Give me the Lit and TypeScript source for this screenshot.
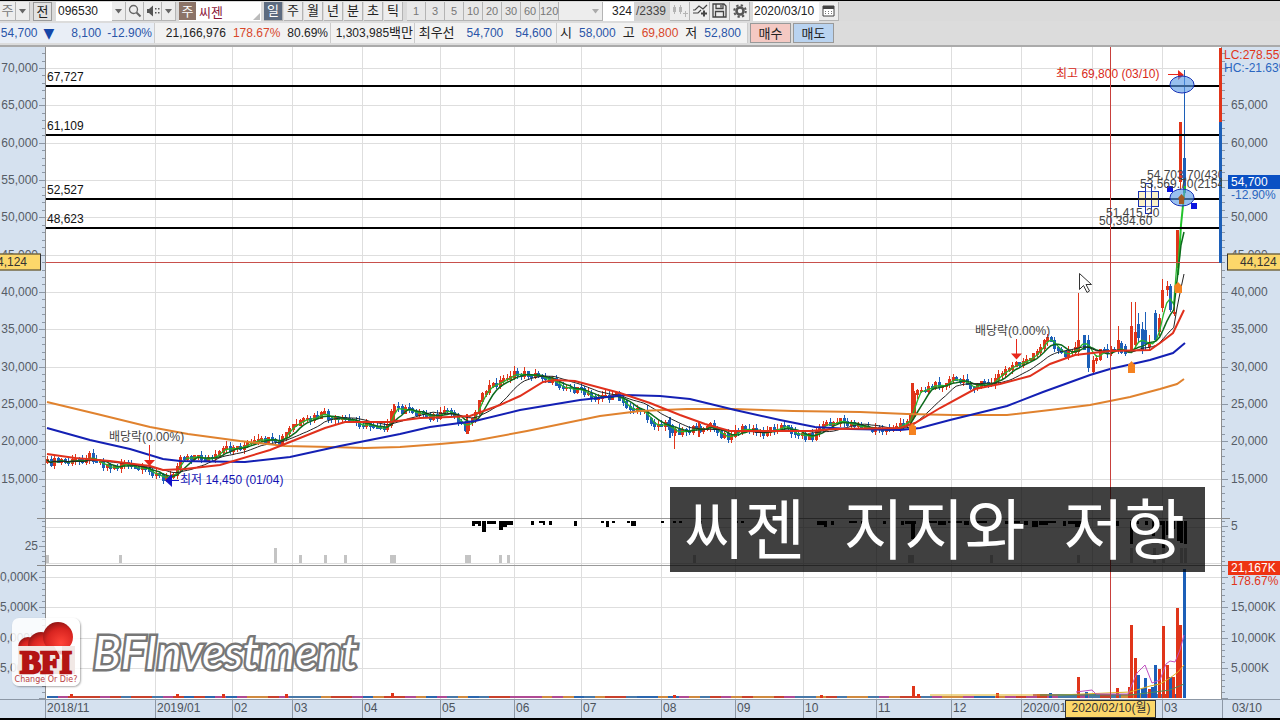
import { LitElement, html, svg, css } from "lit";
import { customElement } from "lit/decorators.js";
import { classMap } from "lit/directives/class-map.js";
import { styleMap } from "lit/directives/style-map.js";

type Pt = [number, number];

/* Drawing space of the plot: x 45..1222, y 47..699 */
const BOX = { x: 45, y: 47, w: 1177, h: 652 };
const priceY = (v: number) => 68 + (70000 - v) * 0.007464;
const volumeY = (k: number) => 698 - k * 0.00605;
const pctX = (x: number) => `${((x - BOX.x) / BOX.w) * 100}%`;
const pctY = (y: number) => `${((y - BOX.y) / BOX.h) * 100}%`;

const UP = "#e0351a";
const DOWN = "#1c5fb8";

const PRICES = [70, 65, 60, 55, 50, 45, 40, 35, 30, 25, 20, 15].map((n) => n * 1000);
const VOLUMES = [20000, 15000, 10000, 5000];
const MONTHS: [number, string][] = [
  [45, "2018/11"], [155, "2019/01"], [232, "02"], [292, "03"], [362, "04"], [440, "05"], [514, "06"],
  [581, "07"], [661, "08"], [735, "09"], [803, "10"], [876, "11"], [951, "12"], [1021, "2020/01"],
  [1162, "03"],
];
const GRID_X = [155, 232, 292, 362, 440, 514, 581, 661, 735, 803, 876, 951, 1021, 1092, 1162];
const LEVELS: [number, string][] = [[86, "67,727"], [135, "61,109"], [199, "52,527"], [228, "48,623"]];

const CLOSE: Pt[] = [
  [47, 463], [60, 461], [70, 463], [90, 456], [103, 464], [113, 469], [124, 462], [130, 468], [147, 471],
  [157, 473], [163, 481], [172, 475], [180, 458], [190, 456], [207, 459], [215, 458], [223, 450], [243, 446],
  [265, 440], [278, 444], [292, 426], [307, 421], [323, 414], [333, 421], [345, 420], [365, 425], [388, 427],
  [393, 406], [400, 410], [425, 414], [435, 418], [448, 411], [460, 422], [466, 428], [475, 411], [487, 388],
  [500, 382], [510, 375], [525, 374], [545, 377], [555, 383], [575, 390], [600, 398], [615, 395], [625, 407],
  [640, 410], [655, 425], [665, 425], [675, 431], [700, 429], [712, 426], [720, 437], [730, 436], [740, 429],
  [762, 433], [780, 426], [800, 435], [812, 437], [822, 425], [840, 422], [855, 424], [870, 430], [885, 430],
  [905, 425], [910, 419], [913, 392], [925, 389], [940, 384], [953, 380], [975, 386], [990, 384], [1000, 375],
  [1015, 364], [1030, 360], [1040, 350], [1048, 334], [1055, 350], [1065, 355], [1075, 347], [1085, 340],
  [1092, 362], [1100, 352], [1112, 350], [1122, 348], [1127, 360], [1131, 345], [1136, 338], [1142, 342],
  [1150, 345], [1156, 335], [1160, 318], [1163, 295], [1167, 292], [1171, 305], [1174, 312],
];

const ORANGE: Pt[] = [[47, 402], [97, 414], [150, 427], [188, 434], [240, 441], [285, 446], [330, 447], [365, 448], [400, 447], [440, 444], [473, 441], [527, 431], [600, 416], [640, 411], [687, 409], [733, 409], [793, 411], [860, 412], [907, 414], [953, 415], [1007, 415], [1050, 410], [1090, 405], [1130, 397], [1160, 389], [1177, 384], [1184, 379]];
const BLUE: Pt[] = [[47, 428], [90, 440], [130, 449], [163, 459], [180, 461], [245, 462], [290, 457], [340, 446], [400, 434], [430, 427], [475, 421], [520, 410], [580, 400], [625, 395], [660, 396], [690, 399], [735, 410], [780, 420], [815, 427], [850, 429], [900, 430], [920, 428], [950, 420], [1007, 406], [1043, 392], [1090, 375], [1110, 369], [1150, 360], [1173, 353], [1185, 343]];
const RED: Pt[] = [[47, 454], [75, 458], [110, 461], [150, 466], [163, 470], [185, 469], [220, 465], [270, 450], [300, 438], [325, 428], [345, 422], [390, 422], [420, 418], [450, 417], [470, 416], [500, 405], [520, 396], [543, 382], [555, 380], [575, 381], [620, 393], [650, 403], [680, 415], [705, 424], [730, 431], [780, 431], [810, 431], [835, 429], [900, 428], [915, 423], [940, 408], [975, 389], [1000, 384], [1030, 376], [1050, 364], [1075, 355], [1110, 351], [1150, 350], [1160, 343], [1173, 333], [1184, 310]];

/* Candles: x, high, body top, body bottom, low, rising */
type Candle = [number, number, number, number, number, boolean];
const TAIL: Candle[] = [
  [1078, 293, 340, 352, 356, true], [1084, 335, 335, 350, 350, false], [1088, 335, 340, 368, 372, false],
  [1093, 356, 360, 372, 374, true], [1118, 326, 340, 351, 352, true], [1121, 341, 343, 353, 354, false],
  [1131, 302, 326, 351, 353, true], [1135, 302, 332, 345, 349, true], [1138, 313, 324, 338, 342, false],
  [1142, 322, 329, 350, 354, false], [1145, 312, 330, 344, 350, false], [1149, 335, 342, 347, 351, true],
  [1155, 310, 313, 340, 342, false], [1159, 314, 318, 332, 336, true], [1162, 279, 290, 308, 312, true],
  [1167, 281, 286, 290, 296, true], [1170, 284, 286, 310, 312, false], [1174, 300, 312, 314, 316, true],
  [1177, 230, 230, 268, 268, true], [1180, 122, 122, 182, 190, true], [1184, 70, 158, 193, 193, false],
];

const noise = (n: number) => {
  const s = Math.sin(n * 12.9898) * 43758.5453;
  return s - Math.floor(s);
};
const at = (pts: Pt[], x: number) => {
  for (let i = 1; i < pts.length; i++) {
    if (x <= pts[i][0]) {
      const [x0, y0] = pts[i - 1];
      const [x1, y1] = pts[i];
      return y0 + ((y1 - y0) * (x - x0)) / (x1 - x0);
    }
  }
  return pts[pts.length - 1][1];
};

const DAYS = Array.from({ length: 322 }, (_, i) => 47 + i * 3.51).filter((x) => x < 1176);
const CLOSES = DAYS.map((x, i) => at(CLOSE, x) + (noise(i) - 0.5) * 6);
const mean = (n: number): Pt[] =>
  DAYS.map((x, i) => {
    const part = CLOSES.slice(Math.max(0, i - n + 1), i + 1);
    return [x, part.reduce((a, b) => a + b, 0) / part.length];
  });
const CANDLES: Candle[] = DAYS.map((x, i): Candle => {
  const prev = i ? CLOSES[i - 1] : CLOSES[i] + 2;
  const rising = CLOSES[i] < prev;
  const top = Math.min(prev, CLOSES[i]) - 1;
  const bottom = Math.max(prev, CLOSES[i]) + 1;
  return [Math.round(x), top - noise(i + 500) * 5, top, bottom, bottom + noise(i + 900) * 4, rising];
})
  .filter((c) => c[0] < 1128 && !(c[0] > 1076 && c[0] < 1096))
  .concat(TAIL);

const HANGING: [number, number, number][] = [
  [472, 9, 3], [472, 3, 5], [478, 3, 5], [482, 4, 11], [487, 9, 3], [499, 4, 9], [503, 4, 6], [507, 6, 4],
  [531, 3, 4], [539, 6, 2], [543, 2, 4], [549, 3, 4], [574, 3, 5], [601, 3, 2], [606, 3, 6], [612, 3, 2],
  [627, 3, 2], [631, 5, 5], [661, 3, 2], [673, 3, 2], [679, 3, 2], [697, 5, 3], [715, 3, 2], [735, 3, 2],
  [741, 3, 2], [817, 7, 4], [824, 3, 6], [831, 3, 4], [849, 8, 2], [861, 4, 3], [883, 3, 3], [901, 3, 4],
  [905, 11, 3], [911, 4, 18], [923, 14, 2], [938, 8, 4], [948, 14, 2], [964, 5, 4], [972, 15, 2], [1005, 4, 3],
  [1014, 6, 2], [1024, 4, 4], [1032, 6, 6], [1039, 9, 4], [1048, 8, 2], [1063, 3, 5], [1068, 15, 3],
  [1075, 5, 6], [1102, 3, 2], [1116, 3, 5], [1130, 3, 23], [1134, 5, 3], [1145, 3, 4], [1152, 3, 15],
  [1157, 7, 4], [1162, 3, 27], [1166, 3, 14], [1172, 3, 8], [1177, 3, 20], [1180, 3, 22], [1184, 3, 23],
];
const STANDING: [number, number, number][] = [
  [46, 3, 8], [119, 3, 8], [274, 3, 15], [299, 3, 8], [324, 3, 8], [344, 3, 8], [390, 6, 8], [465, 6, 8],
  [499, 3, 8], [507, 3, 8], [693, 3, 8], [908, 6, 8], [990, 3, 8], [1077, 3, 8], [1130, 3, 15],
  [1153, 3, 15], [1162, 3, 15], [1180, 3, 15], [1184, 3, 15],
];
const VOLUME_BARS: [number, number, boolean][] = [
  [71, 694, true], [177, 694, true], [223, 694, true], [286, 694, true], [392, 693, true], [674, 695, true],
  [821, 695, true], [913, 686, true], [918, 694, true], [997, 693, true], [1050, 693, false],
  [1078, 677, true], [1086, 692, false], [1117, 688, true], [1129, 687, true], [1131, 625, true], [1135, 658, true],
  [1138, 675, false], [1142, 688, false], [1145, 678, false], [1149, 689, true], [1152, 687, false], [1155, 665, false],
  [1159, 669, true], [1163, 626, true], [1167, 665, true], [1170, 677, false], [1173, 677, true],
  [1177, 608, true], [1180, 625, true], [1184, 569, false],
];
const MAGENTA: Pt[] = [[1076, 692], [1092, 690], [1096, 694], [1128, 694], [1137, 673], [1145, 665], [1152, 683], [1160, 680], [1166, 664], [1170, 661], [1175, 662], [1180, 650], [1184, 635]];
const GOLD: Pt[] = [[930, 695], [1060, 695], [1130, 692], [1150, 686], [1160, 684], [1170, 678], [1178, 672], [1184, 665]];
const GREEN_VOL: Pt[] = [[1040, 695], [1130, 695], [1155, 692], [1170, 690], [1184, 684]];

const path = (pts: Pt[]) => pts.map((p, i) => `${i ? "L" : "M"}${p[0].toFixed(1)} ${p[1].toFixed(1)}`).join("");

const LABELS: { x: number; y: number; text: string; tone?: string }[] = [
  ...LEVELS.map(([y, text]) => ({ x: 47, y: y - 9, text, tone: "ink" })),
  { x: 109, y: 437, text: "배당락(0.00%)" },
  { x: 975, y: 331, text: "배당락(0.00%)" },
  { x: 180, y: 480, text: "최저 14,450 (01/04)", tone: "low" },
  { x: 1056, y: 74, text: "최고 69,800 (03/10)", tone: "high" },
  { x: 1147, y: 175, text: "54,703.70(430.20%)" },
  { x: 1140, y: 184, text: "53,569.70(2154.1%)" },
  { x: 1106, y: 213, text: "51,415.20" },
  { x: 1099, y: 221, text: "50,394.60" },
];

const FONT = css`
  font-family: "Liberation Sans", "Noto Sans CJK KR", sans-serif;
`;

@customElement("stock-toolbar")
export class StockToolbar extends LitElement {
  static styles = css`
    :host { display: flex; align-items: center; height: 20px; background: #dadada; color: #222; overflow: hidden; }
    * { box-sizing: border-box; }
    button, input, select { ${FONT} font-size: 12px; line-height: 18px; color: inherit; margin: 0; padding: 0; border: 0; border-radius: 0; }
    button, select, .total { flex: none; height: 19px; background: #ededed; border-right: 1px solid #b4b4b4; border-bottom: 1px solid #b4b4b4; }
    button { width: 20px; display: grid; place-items: center; }
    .period { width: 19px; font-size: 13px; margin-right: 1px; }
    .minute { width: 19px; color: #777; background: #e8e8e8; font-size: 11px; }
    .active { background: #5c6b80; color: #fff; }
    .kind { width: 16px; color: #777; font-size: 13px; }
    .slim { width: 18px; }
    .framed { border: 1px solid #999; background: #e2e2e2; margin-left: 3px; }
    .gap { margin-left: 3px; }
    input { height: 19px; background: #fff; }
    .code { width: 56px; padding-left: 2px; }
    .name { width: 65px; padding-left: 3px; color: #8a1538; font-size: 13px; }
    .count { width: 31px; text-align: right; padding-right: 2px; }
    .total { ${FONT} width: 36px; font-size: 12px; line-height: 18px; background: #d4d4d4; border: 0; padding-left: 2px; color: #444; }
    .date { width: 66px; padding-left: 1px; }
    .drop { position: relative; display: flex; flex: none; }
    .drop select { width: 14px; appearance: none; color: transparent; }
    .drop.blank select { width: 44px; }
    .drop svg { position: absolute; right: 4px; top: 7px; pointer-events: none; }
    .tag { flex: none; width: 17px; height: 18px; background: #8c7468; color: #fff; font: 13px/18px "Noto Sans CJK KR", sans-serif; text-align: center; }
    .field { position: relative; display: flex; background: #fff; flex: none; }
    .corner { position: absolute; right: 1px; bottom: 1px; }
  `;

  private drop(label: string, extra = "") {
    return html`<span class="drop ${extra}"><select aria-label=${label}><option></option></select>
      <svg width="7" height="5" viewBox="0 0 7 5"><path d="M0 0h7L3.500 4.500z" fill=${extra ? "#aaa" : "#666"} /></svg></span>`;
  }

  render() {
    const periods = ["일", "주", "월", "년", "분", "초", "틱"];
    const minutes = ["1", "3", "5", "10", "20", "30", "60", "120"];
    return html`
      <button class="kind" aria-label="종목 구분">주</button>
      ${this.drop("구분 선택")}
      <button class="framed period">전</button>
      <span class="field gap"><input class="code" aria-label="종목코드" value="096530" />${this.drop("최근 종목")}</span>
      <button class="slim" aria-label="종목 검색"><svg width="14" height="14" viewBox="0 0 14 14" fill="none" stroke="#666"><circle cx="5.500" cy="5.500" r="4" stroke-width="1.300" /><path d="M8.500 8.500l4 4" stroke-width="2" /></svg></button>
      <button class="slim" aria-label="음성"><svg width="14" height="12" viewBox="0 0 14 12" fill="#555"><path d="M1 4h2l4-3.500v11L3 8H1zM9 3h1.500v1.500H9zM12 3h1.500v1.500H12zM9 7h1.500v1.500H9zM12 7h1.500v1.500H12z" /></svg></button>
      ${this.drop("음성 설정")}
      <span class="field gap"><span class="tag">주</span><input class="name" aria-label="종목명" value="씨젠" />
        <svg class="corner" width="7" height="7" viewBox="0 0 7 7"><path d="M7 0v7H0z" fill="#bbb" /></svg></span>
      <span class="gap"></span>
      ${periods.map((p, i) => html`<button class=${classMap({ period: true, active: i === 0 })}>${p}</button>`)}
      <span class="gap"></span>
      ${minutes.map((m) => html`<button class="minute">${m}</button>`)}
      ${this.drop("분 선택", "blank")}
      <input class="count" aria-label="표시 봉 수" value="324" /><span class="total">/2339</span>
      <button aria-label="봉 추가"><svg width="16" height="14" viewBox="0 0 16 14" fill="#b5b5b5"><path d="M1 3h3v5H1zM2 1h1v9H2zM7 3h3v5H7zM8 1h1v9H8zM11 9h2V7h1v2h2v1h-2v3h-1v-3h-2z" /></svg></button>
      <button aria-label="지표 추가"><svg width="16" height="15" viewBox="0 0 16 15" fill="none" stroke="#444"><path d="M1 7h2l4-4 4 3 4-4M1 10h5l3-3" stroke-width="1.200" /><path d="M12 7.500v6M9 10.500h6" stroke-width="2" /></svg></button>
      <button aria-label="저장"><svg width="15" height="15" viewBox="0 0 15 15" fill="none" stroke="#444" stroke-width="1.300"><path d="M1 1h11l2 2v11H1zM4 1v4.500h7V1M3.500 14V8.500h8V14M9 2v2.500" /></svg></button>
      <button aria-label="설정"><svg width="14" height="14" viewBox="0 0 14 14" fill="none" stroke="#555"><circle cx="7" cy="7" r="3.500" stroke-width="2.600" /><circle cx="7" cy="7" r="5.800" stroke-width="2" stroke-dasharray="2.300 2.255" /></svg></button>
      <input class="date gap" aria-label="기준일" value="2020/03/10" />
      <button aria-label="달력"><svg width="13" height="12" viewBox="0 0 13 12"><path d="M1 1h11v10H1z" fill="#fff" stroke="#444" /><path d="M1 1h11v3H1z" fill="#444" /><path d="M3 6h1v1H3zM6 6h1v1H6zM9 6h1v1H9zM3 8h1v1H3zM6 8h1v1H6zM9 8h1v1H9z" fill="#777" /></svg></button>
    `;
  }
}

@customElement("quote-bar")
export class QuoteBar extends LitElement {
  static styles = css`
    :host { display: flex; align-items: center; height: 26px; background: #dcdcdc; border-bottom: 2px solid #aaa; box-sizing: border-box; ${FONT} font-size: 12px; line-height: 20px; color: #222; overflow: hidden; }
    .group { display: flex; justify-content: flex-end; gap: 7px; height: 20px; background: #f2f2f2; border-right: 1px solid #ccc; box-sizing: border-box; padding-right: 2px; white-space: nowrap; flex: none; }
    .first { width: 155px; background: #e9eef6; gap: 6px; }
    .turnover { width: 176px; }
    .amount { width: 84px; padding-right: 1px; }
    .best { width: 142px; gap: 12px; padding-right: 4px; }
    .range { width: 191px; padding-right: 6px; }
    .up { color: #d8472b; }
    .down { color: #2a55a8; }
    .ko { font-size: 13px; }
    .mark { color: #1546a8; font-family: "DejaVu Sans", sans-serif; font-size: 14px; margin-right: 11px; }
    button { flex: none; width: 41px; height: 20px; margin-left: 2px; padding: 0; border: 1px solid #999; font: 13px/18px "Noto Sans CJK KR", sans-serif; color: #222; }
    .buy { background: #f4c9c3; }
    .sell { background: #b9d3f0; }
  `;
  render() {
    return html`
      <div class="group first down"><span>54,700</span><span class="mark">▼</span><span>8,100</span><span>-12.90%</span></div>
      <div class="group turnover"><span>21,166,976</span><span class="up">178.67%</span><span>80.69%</span></div>
      <div class="group amount"><span>1,303,985<span class="ko">백만</span></span></div>
      <div class="group best"><span class="ko">최우선</span><span class="down">54,700</span><span class="down">54,600</span></div>
      <div class="group range"><span class="ko">시</span><span class="down">58,000</span><span class="ko">고</span><span class="up">69,800</span><span class="ko">저</span><span class="down">52,800</span></div>
      <button class="buy">매수</button><button class="sell">매도</button>
    `;
  }
}

@customElement("price-axis")
export class PriceAxis extends LitElement {
  static properties = { side: { type: String, reflect: true } };
  declare side: string;
  static styles = css`
    :host { display: block; position: relative; background: #d5e1ef; overflow: hidden; ${FONT} font-size: 12px; line-height: 14px; color: #555c66; }
    .ticks { position: absolute; top: 0; height: 100%; width: 8px; }
    :host([side="left"]) .ticks { right: 0; }
    :host([side="right"]) .ticks { left: 0; }
    span { position: absolute; white-space: nowrap; transform: translateY(-50%); }
    :host([side="left"]) span { right: 7px; }
    :host([side="right"]) span { left: 9px; }
    :host([side="right"]) .edge { left: 2px; }
    .up { color: #e0351a; }
    .down { color: #2a66c0; }
    .last, .volume { color: #fff; padding-left: 3px; }
    :host([side="right"]) .last, :host([side="right"]) .volume { left: 6px; right: 0; }
    .last { background: #0a50c4; }
    .volume { background: #ee3312; }
    .cross { box-sizing: border-box; background: #fcd76a; border: 1px solid #333; color: #333; height: 17px; line-height: 15px; }
    :host([side="left"]) .cross { right: 4px; padding-right: 13px; width: 60px; text-align: right; }
    :host([side="right"]) .cross { left: 5px; right: -2px; padding-left: 12px; }
  `;
  render() {
    const left = this.side === "left";
    const label = (y: number, text: string, cls = "") =>
      html`<span class=${cls} style=${styleMap({ top: pctY(y) })}>${text}</span>`;
    const minor: number[] = [];
    for (let v = 11000; v <= 72000; v += 1000) minor.push(priceY(v));
    for (let v = 0; v <= 21000; v += 1000) minor.push(volumeY(v));
    for (let y = 521; y < 564; y += 5) minor.push(y);
    const major = [...PRICES.map(priceY), ...VOLUMES.map(volumeY), left ? 546 : 526, 698];
    const tick = (y: number, len: number) => {
      const p = Math.round(y) + 0.5;
      return left ? `M8 ${p}h${-len}` : `M0 ${p}h${len}`;
    };
    return html`
      <svg class="ticks" viewBox="0 ${BOX.y} 8 ${BOX.h}" preserveAspectRatio="none" fill="none" stroke="#8d98a6">
        <path d=${minor.map((y) => tick(y, 3)).join("")} />
        <path d=${major.map((y) => tick(y, 6)).join("")} />
        <path d="M0 518.500h8M0 565.500h8" stroke="#888" />
      </svg>
      ${PRICES.filter((p) => left || (p !== 70000 && p !== 55000)).map((p) => label(priceY(p), p.toLocaleString("en-US")))}
      ${VOLUMES.filter((v) => left || v !== 20000).map((v) => label(volumeY(v), `${v.toLocaleString("en-US")}K`))}
      ${left ? label(546, "25") : label(526, "5")}
      ${left
        ? ""
        : [
            label(55, "LC:278.55%", "edge up"),
            label(68, "HC:-21.63%", "edge down"),
            label(182, "54,700", "last"),
            label(195, "-12.90%", "down"),
            label(568, "21,167K", "volume"),
            label(581, "178.67%", "up"),
          ]}
      ${label(262, "44,124", "cross")}
    `;
  }
}

@customElement("candle-plot")
export class CandlePlot extends LitElement {
  static styles = css`
    :host { display: block; position: relative; background: #fff; overflow: hidden; ${FONT} font-size: 12px; line-height: 14px; color: #444; }
    .plot { position: absolute; inset: 0; width: 100%; height: 100%; }
    .label { position: absolute; white-space: nowrap; transform: translateY(-50%); }
    .ink { color: #111; }
    .low { color: #1414b4; }
    .high { color: #d82a1a; }
  `;
  render() {
    const hy = [...PRICES.map(priceY), 527, ...VOLUMES.map(volumeY)];
    return html`
      <svg class="plot" viewBox="${BOX.x} ${BOX.y} ${BOX.w} ${BOX.h}" preserveAspectRatio="none" fill="none" role="img" aria-label="씨젠 일봉 차트">
        <g stroke="#dedede" shape-rendering="crispEdges">
          ${hy.map((y) => svg`<path d="M45 ${Math.round(y) + 0.5}H1222" />`)}
          ${GRID_X.map((x) => svg`<path d="M${x + 0.5} 47V699" />`)}
        </g>
        <path d="M45 563.500H1222" stroke="#ddd" />
        <path d="M45 518.500H1222M45 565.500H1222" stroke="#999" />
        <path d="M45.500 47V699M1221.500 47V699" stroke="#8d8d8d" />

        <g fill="#c4c4c4">${STANDING.map(([x, w, h]) => svg`<rect x=${x} y=${563 - h} width=${w} height=${h} />`)}</g>
        <g fill="#000">${HANGING.map(([x, w, h]) => svg`<rect x=${x} y="521" width=${w} height=${h} />`)}</g>

        ${DAYS.map((x, i) => svg`<rect x=${Math.round(x)} y=${x > 1030 ? 694 : 696} width="4" height=${x > 1030 ? 4 : 2} fill=${["#c8402c", "#2b66ae", "#b04a94", "#4878a8", "#d08a40"][Math.floor(noise(Math.floor(i / 3) + 70) * 5)]} />`)}
        ${VOLUME_BARS.map(([x, y, up]) => svg`<rect x=${x - 1} y=${y} width="3" height=${698 - y} fill=${up ? UP : DOWN} />`)}
        <path d=${path(GOLD)} stroke="#e0b020" />
        <path d=${path(GREEN_VOL)} stroke="#4d8a5a" />
        <path d=${path(MAGENTA)} stroke="#c050c0" />

        <g shape-rendering="crispEdges">
          ${CANDLES.map(([x, h, t, b, l, up]) => svg`<rect x=${x} y=${h} width="1" height=${l - h} fill=${up ? UP : DOWN} />
              <rect x=${x - 1} y=${t} width="3" height=${b - t} fill=${up ? UP : DOWN} />`)}
          <path d="M912.500 383V420" stroke=${UP} stroke-width="3" />
          <path d="M393.500 404V422M466.500 414V434M699 422V437" stroke=${UP} stroke-width="2" />
          <path d="M670 417V438" stroke=${DOWN} stroke-width="2" />
          <path d="M674.500 430V449" stroke=${UP} />
        </g>
        <path d="${path(mean(3))}L1177 262" stroke="#27b52c" stroke-width="1.300" />
        <path d="M1178 275L1181 225L1185 186" stroke="#22c32c" stroke-width="2" />
        <path d="${path(mean(6))}L1178 272L1181 245L1184 232" stroke="#0c6a1c" stroke-width="1.500" />
        <path d="${path(mean(13))}L1177 308L1181 288L1184 274" stroke="#222" />
        <path d=${path(ORANGE)} stroke="#e0822e" stroke-width="2" />
        <path d=${path(BLUE)} stroke="#1420b4" stroke-width="2" />
        <path d=${path(RED)} stroke="#e0301c" stroke-width="2" />

        <path d=${LEVELS.map(([y]) => `M46 ${y}H1222`).join("")} stroke="#000" stroke-width="2" />
        <path d="M46 262.500H1222" stroke="#c8504c" />
        <path d="M1110.500 47V699" stroke="#c8403c" />
        <path d="M1220.500 48V122" stroke="#e0351a" stroke-width="3" />
        <path d="M1220.500 122V263" stroke="#1c5fb8" stroke-width="3" />

        <g fill="#f58220">
          <path d="M909 426h1l2.500-3 2.500 3h1v9h-7zM1128 364h1l2.500-3 2.500 3h1v9h-7zM1174 286l4-4 4 4v7h-7z" />
        </g>
        <g fill="#e8281c" stroke="#e8281c">
          <path d="M149.500 445V460M1016.500 339V354M1168 74.500H1180" />
          <path d="M144 460h11l-5.500 6zM1011 353.500h11l-5.500 6zM1178 70l6 5-6 5z" stroke="none" />
        </g>
        <path d="M171 480.500H179" stroke="#1414c8" />
        <path d="M172 474v13l-7-6.500z" fill="#1414c8" />

        <g stroke="#1830b4">
          <rect x="1138.500" y="191.500" width="20" height="15" fill="#f6d97866" />
          <rect x="1145.500" y="183.500" width="6" height="30" fill="#fff8" />
          <path d="M1138 199H1159" stroke="#222" stroke-width="2" />
          <ellipse cx="1182" cy="84.500" rx="12" ry="8.500" fill="#5b9be6a0" />
          <ellipse cx="1182" cy="197.500" rx="12" ry="8.500" fill="#5b9be6a0" />
        </g>
        <path d="M1178 198l3.500-4 3.500 4-1 1v5h-5v-5z" fill="#a05a24" />
        <path d="M1167 186h6v6h-6zM1191 203h6v6h-6z" fill="#0a14e0" />
        <path d="M1079.500 273.500v16l4-4 3.500 7 2.500-1.500-3.500-6.500h5.500z" fill="#fff" stroke="#333" />
      </svg>
      ${LABELS.map(
        (l) => html`<div class="label ${l.tone ?? ""}" style=${styleMap({ left: pctX(l.x), top: pctY(l.y) })}>${l.text}</div>`,
      )}
    `;
  }
}

@customElement("date-axis")
export class DateAxis extends LitElement {
  static styles = css`
    :host { display: block; position: relative; background: #d5e1ef; border-top: 1px solid #8d98a6; box-sizing: border-box; ${FONT} font-size: 12px; line-height: 17px; color: #4c535c; }
    span { position: absolute; top: 0; height: 100%; padding-left: 1px; border-left: 1px solid #8d98a6; white-space: nowrap; }
    .cross { box-sizing: border-box; background: #fcd76a; border: 1px solid #333; color: #333; line-height: 15px; width: 91px; text-align: center; }
  `;
  render() {
    return html`${MONTHS.map(([x, t]) => html`<span style=${styleMap({ left: pctX(x) })}>${t}</span>`)}
      <span class="cross" style=${styleMap({ left: pctX(1065) })}>2020/02/10(월)</span>`;
  }
}

@customElement("channel-mark")
export class ChannelMark extends LitElement {
  static styles = css`
    :host { display: flex; align-items: center; gap: 13px; }
    .tile { width: 68px; height: 68px; flex: none; border-radius: 7px; background: #ffffffd8; box-shadow: 1px 1px 2px #0005; }
    .initials { font: 900 31px "Liberation Serif", serif; }
    .motto { font: 8px "DejaVu Sans", sans-serif; }
    .word { font: italic 400 46px/56px Lato, sans-serif; color: #fff; -webkit-text-stroke: 5px #777; paint-order: stroke fill; white-space: nowrap; }
  `;
  render() {
    return html`
      <svg class="tile" viewBox="0 0 68 68" role="img" aria-label="BFI">
        <defs>
          <radialGradient id="ball" cx="0.600" cy="0.700" r="0.800"><stop offset="0" stop-color="#ff4438" /><stop offset="0.600" stop-color="#d82420" /><stop offset="1" stop-color="#7c1010" /></radialGradient>
        </defs>
        <circle cx="16" cy="29" r="10" fill="url(#ball)" />
        <circle cx="29" cy="27" r="13" fill="url(#ball)" />
        <circle cx="46" cy="19" r="15" fill="url(#ball)" />
        <rect x="6" y="28" width="57" height="28" fill="#f1e8e5" />
        <text class="initials" x="34" y="54.500" text-anchor="middle" fill="#b41414" stroke="#b41414" stroke-width="2.500">BFI</text>
        <path d="M42 28l8 14V28zM6 42l8-14" fill="#fff" opacity="0.700" />
        <text class="motto" x="34" y="63.500" text-anchor="middle" fill="#b44">Change Or Die?</text>
      </svg>
      <span class="word">BFInvestment</span>
    `;
  }
}

@customElement("app-root")
export class AppRoot extends LitElement {
  static styles = css`
    :host { display: flex; flex-direction: column; min-height: 100vh; box-sizing: border-box; padding: 1px 0 2px; background: #000; overflow: hidden; position: relative; }
    .chart { flex: 1; display: grid; grid-template-columns: 45px minmax(0, 1fr) 58px; grid-template-rows: minmax(400px, 1fr) 19px; position: relative; }
    .corner { background: #d5e1ef; border-top: 1px solid #8d98a6; ${FONT} font-size: 12px; line-height: 17px; color: #4c535c; }
    .today { border-left: 1px solid #8d98a6; padding-left: 9px; }
    .brand { position: absolute; left: 12px; bottom: 32px; }
    .caption { position: absolute; right: 75px; bottom: 146px; display: flex; gap: 38px; padding: 0 20px 8px 14px; background: #000000bf; color: #fff; font: 400 66px/77px "Noto Sans CJK KR", sans-serif; white-space: nowrap; }
  `;
  render() {
    return html`
      <stock-toolbar></stock-toolbar>
      <quote-bar></quote-bar>
      <main class="chart">
        <price-axis side="left"></price-axis>
        <candle-plot></candle-plot>
        <price-axis side="right"></price-axis>
        <div class="corner"></div>
        <date-axis></date-axis>
        <div class="corner today">03/10</div>
        <channel-mark class="brand"></channel-mark>
        <div class="caption"><span>씨젠</span><span>지지와</span><span>저항</span></div>
      </main>
    `;
  }
}
